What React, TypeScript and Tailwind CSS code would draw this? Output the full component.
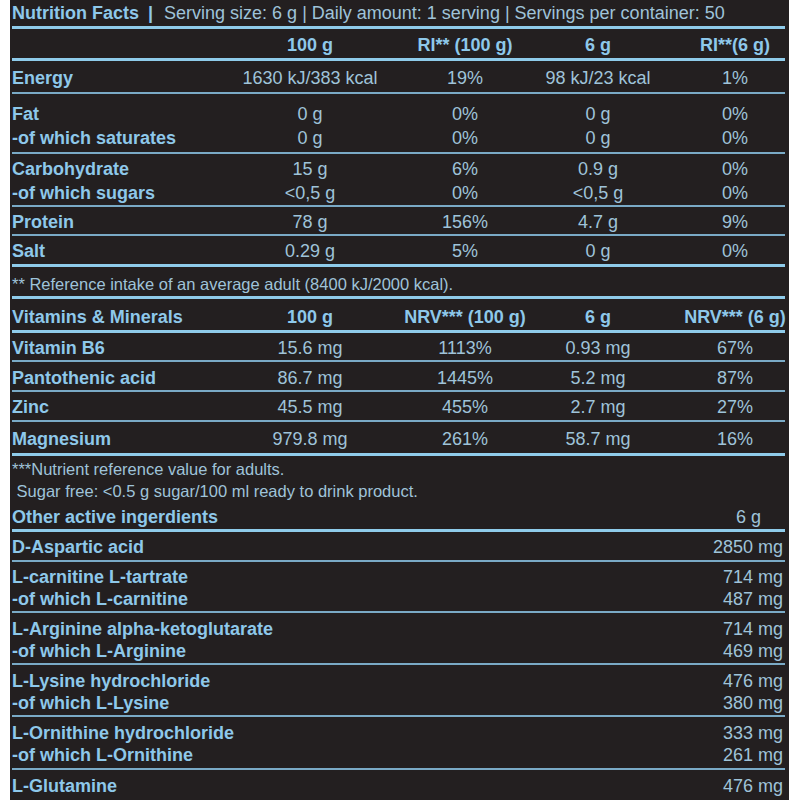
import React from "react";

const FONT = { fontFamily: '"Liberation Sans", Arial, sans-serif' };
const COLS = "grid grid-cols-[190px_216px_94px_172px_102px]";

type Cells = [string, string, string, string, string];

function Line({ thick }: { thick?: boolean }) {
  return <div className={thick ? "h-[3px] bg-[#8fcbea]" : "h-[2px] bg-[#7aaac6]"} />;
}

function Cell({ children, bold }: { children: React.ReactNode; bold?: boolean }) {
  return (
    <div className={"flex justify-center whitespace-nowrap " + (bold ? "font-bold text-[#8ec8ea]" : "")}>
      {children}
    </div>
  );
}

function GridRows({ rows, h, bold }: { rows: Cells[]; h: string; bold?: boolean }) {
  return (
    <div className={"flex flex-col justify-center " + h}>
      {rows.map((r, i) => (
        <div key={i} className={COLS + " leading-[24px]"}>
          <div className="whitespace-nowrap font-bold text-[#8ec8ea]">{r[0]}</div>
          <Cell bold={bold}>{r[1]}</Cell>
          <Cell bold={bold}>{r[2]}</Cell>
          <Cell bold={bold}>{r[3]}</Cell>
          <Cell bold={bold}>{r[4]}</Cell>
        </div>
      ))}
    </div>
  );
}

function Active({ rows, h }: { rows: [string, string][]; h: string }) {
  return (
    <div className={"flex flex-col justify-center " + h}>
      {rows.map(([a, b], i) => (
        <div key={i} className="flex justify-between leading-[22px]">
          <span className="font-bold text-[#8ec8ea]">{a}</span>
          <span className="pr-[2px]">{b}</span>
        </div>
      ))}
    </div>
  );
}

export default function App() {
  return (
    <div className="w-[800px] h-[800px] bg-white overflow-hidden" style={FONT}>
      <div className="ml-[10px] w-[779px] h-[800px] bg-[#231f20] pl-[2px] pr-[4px] text-[18px] text-[#9fc3d9]">
        <div className="h-[26px] pt-[1px] flex items-center whitespace-nowrap">
          <span className="font-bold text-[#8ec8ea]">Nutrition Facts</span>
          <span className="font-bold text-[#8ec8ea] pl-[9px] pr-[11px]">|</span>
          <span>Serving size: 6 g | Daily amount: 1 serving | Servings per container: 50</span>
        </div>
        <Line thick />
        <GridRows h="h-[29px] pt-[2px]" bold rows={[["", "100 g", "RI** (100 g)", "6 g", "RI**(6 g)"]]} />
        <Line thick />
        <GridRows h="h-[31px] pt-[2px]" rows={[["Energy", "1630 kJ/383 kcal", "19%", "98 kJ/23 kcal", "1%"]]} />
        <Line />
        <GridRows
          h="h-[58px] pt-[5px]"
          rows={[
            ["Fat", "0 g", "0%", "0 g", "0%"],
            ["-of which saturates", "0 g", "0%", "0 g", "0%"],
          ]}
        />
        <Line />
        <GridRows
          h="h-[51px] pt-[2px]"
          rows={[
            ["Carbohydrate", "15 g", "6%", "0.9 g", "0%"],
            ["-of which sugars", "<0,5 g", "0%", "<0,5 g", "0%"],
          ]}
        />
        <Line />
        <GridRows h="h-[27px] pt-[2px]" rows={[["Protein", "78 g", "156%", "4.7 g", "9%"]]} />
        <Line />
        <GridRows h="h-[28px] pt-[2px]" rows={[["Salt", "0.29 g", "5%", "0 g", "0%"]]} />
        <Line thick />
        <div className="h-[29px] pt-[5px] flex items-center text-[16.5px]">
          ** Reference intake of an average adult (8400 kJ/2000 kcal).
        </div>
        <Line thick />
        <GridRows
          h="h-[31px] pt-[5px]"
          bold
          rows={[["Vitamins & Minerals", "100 g", "NRV*** (100 g)", "6 g", "NRV*** (6 g)"]]}
        />
        <Line thick />
        <GridRows h="h-[27px] pt-[2px]" rows={[["Vitamin B6", "15.6 mg", "1113%", "0.93 mg", "67%"]]} />
        <Line />
        <GridRows h="h-[28px] pt-[3px]" rows={[["Pantothenic acid", "86.7 mg", "1445%", "5.2 mg", "87%"]]} />
        <Line />
        <GridRows h="h-[28px] pt-[2px]" rows={[["Zinc", "45.5 mg", "455%", "2.7 mg", "27%"]]} />
        <Line />
        <GridRows h="h-[31px] pt-[3px]" rows={[["Magnesium", "979.8 mg", "261%", "58.7 mg", "16%"]]} />
        <Line thick />
        <div className="h-[73px] pt-[3px] flex flex-col justify-center text-[16.5px] leading-[22px]">
          <div>***Nutrient reference value for adults.</div>
          <div>&nbsp;Sugar free: &lt;0.5 g sugar/100 ml ready to drink product.</div>
          <div className="flex justify-between text-[18px] leading-[26px] pt-[2px]">
            <span className="font-bold text-[#8ec8ea]">Other active ingerdients</span>
            <span className="pr-[24px]">6 g</span>
          </div>
        </div>
        <Line thick />
        <Active h="h-[28px] pt-[2px]" rows={[["D-Aspartic acid", "2850 mg"]]} />
        <Line />
        <Active
          h="h-[49px] pt-[3px]"
          rows={[
            ["L-carnitine L-tartrate", "714 mg"],
            ["-of which L-carnitine", "487 mg"],
          ]}
        />
        <Line />
        <Active
          h="h-[50px] pt-[4px]"
          rows={[
            ["L-Arginine alpha-ketoglutarate", "714 mg"],
            ["-of which L-Arginine", "469 mg"],
          ]}
        />
        <Line />
        <Active
          h="h-[50px] pt-[3px]"
          rows={[
            ["L-Lysine hydrochloride", "476 mg"],
            ["-of which L-Lysine", "380 mg"],
          ]}
        />
        <Line />
        <Active
          h="h-[51px] pt-[3px]"
          rows={[
            ["L-Ornithine hydrochloride", "333 mg"],
            ["-of which L-Ornithine", "261 mg"],
          ]}
        />
        <Line />
        <Active h="h-[30px] pt-[2px]" rows={[["L-Glutamine", "476 mg"]]} />
      </div>
    </div>
  );
}
